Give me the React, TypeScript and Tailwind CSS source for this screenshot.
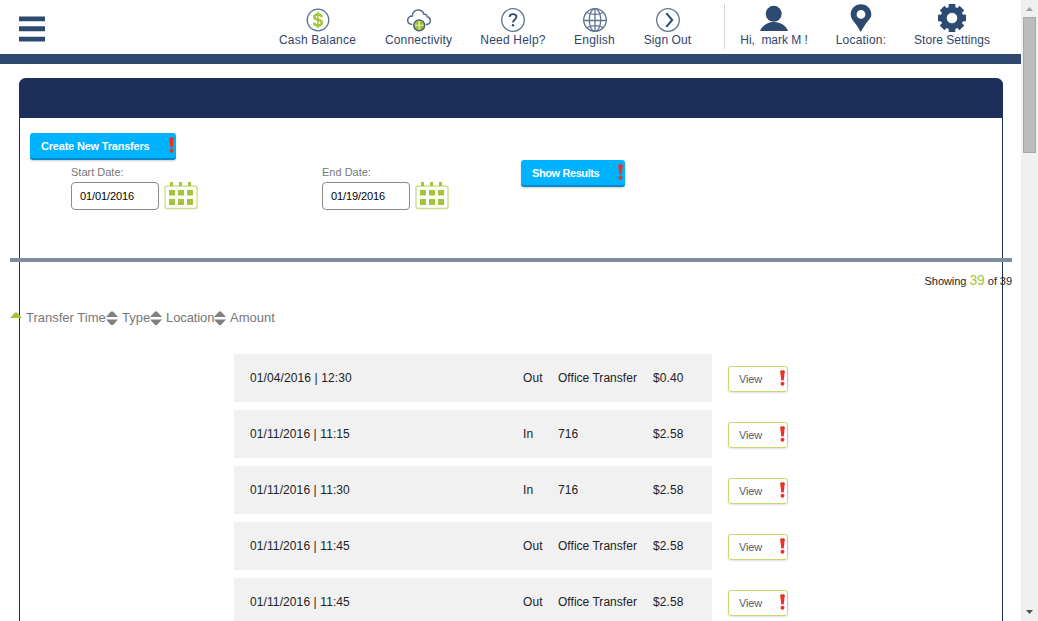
import type { ReactNode } from 'react';

const NAVY = '#2d4a71';
const GREEN = '#a4c53a';

function NavItem({ icon, label, className }: { icon: ReactNode; label: string; className: string }) {
  return (
    <a className={`flex shrink-0 flex-col items-center text-xs leading-4 text-[#2f446c] ${className}`}>
      <span className="flex h-8 items-end justify-center">{icon}</span>
      <span className="whitespace-pre">{label}</span>
    </a>
  );
}

function CashIcon() {
  return (
    <svg width="24" height="24" viewBox="0 0 24 24">
      <circle cx="12" cy="12" r="10.8" fill="none" stroke="#5d7592" strokeWidth="1.3" />
      <path d="M15.800 9C15.500 7.200 14.200 6.400 12 6.400C9.600 6.400 8.300 7.400 8.300 9C8.300 12.800 15.900 10.700 15.900 14.600C15.900 16.500 14.300 17.500 12 17.500C9.600 17.500 8.200 16.500 8 14.700" fill="none" stroke={GREEN} strokeWidth="2.500" />
      <path d="M12 3.800v16.400" stroke={GREEN} strokeWidth="1.500" />
    </svg>
  );
}

function CloudIcon() {
  return (
    <svg width="24" height="24" viewBox="0 0 24 24">
      <path d="M5.200 16.500C2.500 16.300 .7 14.600.7 12.200S2.700 8 5.300 8.100C5.200 4.500 7.800 2 11.200 2C14.300 2 16.300 3.700 17 6.300C18.800 5.900 20.200 7 20.200 8.800C22.300 9.100 23.300 10.700 23.300 12.500C23.300 14.900 21.500 16.500 18.700 16.500" fill="none" stroke="#536b88" strokeWidth="1.500" />
      <circle cx="12.200" cy="17.300" r="5.500" fill="#a0bd38" stroke="#465e73" strokeWidth="1.300" />
      <path d="M12.200 13v8.600M7.900 17.300h8.600" stroke="#e6efcb" strokeWidth="1.100" />
    </svg>
  );
}

function HelpIcon() {
  return (
    <svg width="24" height="24" viewBox="0 0 24 24" fill="none">
      <circle cx="12" cy="12" r="11.300" stroke="#5d7592" strokeWidth="1.3" />
      <path d="M8.700 9C8.700 7.200 10 6.200 11.900 6.200S15.400 7.300 15.400 9C15.400 11.400 12 11.600 12 14.500" stroke={NAVY} strokeWidth="1.800" />
      <circle cx="12" cy="17.300" r="1.200" fill={NAVY} />
    </svg>
  );
}

function GlobeIcon() {
  return (
    <svg width="24" height="24" viewBox="0 0 24 24" fill="none" stroke="#5d7592" strokeWidth="1.300">
      <circle cx="12" cy="12" r="11.300" />
      <ellipse cx="12" cy="12" rx="5.700" ry="11.300" />
      <path d="M12 .7v22.600M.7 12.500h22.600M3.800 4.500Q12 8.300 20.200 4.500M3.800 19.500Q12 15.700 20.200 19.500" />
    </svg>
  );
}

function SignOutIcon() {
  return (
    <svg width="24" height="24" viewBox="0 0 24 24" fill="none">
      <circle cx="12" cy="12" r="11.300" stroke="#5d7592" strokeWidth="1.300" />
      <path d="M10.300 5.200L16.200 12L10.300 18.800" stroke={NAVY} strokeWidth="2" />
    </svg>
  );
}

function UserIcon() {
  return (
    <svg width="28" height="28" viewBox="0 0 28 28" fill={NAVY} className="-mb-px">
      <circle cx="13.700" cy="8.800" r="8" />
      <path d="M0 26C2 20.500 7.500 17 14 17S26 20.500 28 26Z" />
    </svg>
  );
}

function PinIcon() {
  return (
    <svg width="22" height="28" viewBox="0 0 22 28" fill={NAVY}>
      <path fillRule="evenodd" d="M11 .2C5 .2.700 4.700.700 10.300C.700 15 3.500 16.800 6 20.500C8 23.300 9.500 26 10.700 28C12 25.500 14 22.500 16 19.500C18.500 16 21.300 14.500 21.300 10.300C21.300 4.700 17 .2 11 .2ZM11 6A4.400 4.400 0 1 1 11 14.800A4.400 4.400 0 0 1 11 6Z" />
    </svg>
  );
}

function GearIcon() {
  return (
    <svg width="28" height="28" viewBox="0 0 28 28" fill={NAVY}>
      <g transform="translate(14 14)">
        {[0, 45, 90, 135].map((a) => (
          <path key={a} transform={`rotate(${a})`} d="M-3.300-14H3.300V14H-3.300Z" />
        ))}
        <circle r="11.300" />
        <circle r="5.300" fill="#fff" />
      </g>
    </svg>
  );
}

function Bang({ className = '' }: { className?: string }) {
  return (
    <svg width="5" height="16" viewBox="0 0 5 16" fill="#f03020" className={className}>
      <path d="M.2 1.500C.2-.3 4.800-.3 4.800 1.500L3.700 10.500H1.300Z" />
      <circle cx="2.500" cy="13.700" r="2" />
    </svg>
  );
}

function CalendarIcon() {
  return (
    <svg width="34" height="29" viewBox="0 0 34 29" className="mt-[-1px]">
      <rect x="1" y="5" width="32" height="22.500" rx="2" fill="#fff" stroke="#ccde8e" strokeWidth="1.400" />
      <g fill={GREEN}>
        <path d="M6 1h3v4H6zM15 1h3v4h-3zM24 1h3v4h-3z" />
        <path d="M5 9h6v5.500H5zM14 9h6v5.500h-6zM23 9h6v5.500h-6zM5 18h6v6H5zM14 18h6v6h-6zM23 18h6v6h-6z" />
      </g>
    </svg>
  );
}

function BlueButton({ label, className }: { label: string; className: string }) {
  return (
    <button className={`flex h-[27px] shrink-0 justify-between rounded-[3px] border-b-2 border-[#0089cb] bg-[#00b3ff] pr-[2px] pl-[11px] text-[11px] leading-[26px] font-bold text-white shadow-[0_1px_2px_rgba(0,0,0,0.2)] ${className}`}>
      <span>{label}</span>
      <Bang className="mt-1" />
    </button>
  );
}

function DateField({ label, value, className }: { label: string; value: string; className: string }) {
  return (
    <div className={className}>
      <div className="h-[22px] text-[11px] leading-[24px] text-[#777]">{label}</div>
      <div className="flex gap-[5px]">
        <div className="h-7 w-[88px] rounded-[4px] border border-[#8c8c8c] px-2 text-[11px] leading-[27px] tracking-[-0.1px] text-black">{value}</div>
        <CalendarIcon />
      </div>
    </div>
  );
}

function SortIcon() {
  return (
    <svg width="12" height="14" viewBox="0 0 12 14" fill="#808080" className="mt-[3px]">
      <path d="M0 6L5 .5H7L12 6ZM0 8.500H12L7 14H5Z" />
    </svg>
  );
}

const transfers = [
  ['01/04/2016 | 12:30', 'Out', 'Office Transfer', '$0.40'],
  ['01/11/2016 | 11:15', 'In', '716', '$2.58'],
  ['01/11/2016 | 11:30', 'In', '716', '$2.58'],
  ['01/11/2016 | 11:45', 'Out', 'Office Transfer', '$2.58'],
  ['01/11/2016 | 11:45', 'Out', 'Office Transfer', '$2.58'],
];

function Header() {
  return (
    <header className="flex h-16 shrink-0 border-b-[10px] border-[#2e486f] bg-white pl-[19px]">
      <svg width="26" height="26" viewBox="0 0 26 26" fill={NAVY} className="mt-4">
        <path d="M0 .400h26v4.900H0zM0 10.300h26v4.900H0zM0 20.700h26v4.900H0z" />
      </svg>
      <nav className="ml-[234px] flex gap-7">
        <NavItem icon={<CashIcon />} label="Cash Balance" className="w-[77px] tracking-[0.2px]" />
        <NavItem icon={<CloudIcon />} label="Connectivity" className="ml-px w-[67px] tracking-[0.15px]" />
        <NavItem icon={<HelpIcon />} label="Need Help?" className="w-[66px] tracking-[0.2px]" />
        <NavItem icon={<GlobeIcon />} label="English" className="w-[41px] tracking-[0.2px]" />
        <NavItem icon={<SignOutIcon />} label="Sign Out" className="ml-px w-[47px] tracking-[0.1px]" />
      </nav>
      <div className="mt-1 ml-[33px] h-[45px] w-px bg-[#d5d5d5]" />
      <nav className="ml-[15px] flex gap-7">
        <NavItem icon={<UserIcon />} label="Hi,  mark M !" className="w-[68px] tracking-[-0.05px]" />
        <NavItem icon={<PinIcon />} label="Location:" className="w-[50px] tracking-[0.2px]" />
        <NavItem icon={<GearIcon />} label="Store Settings" className="w-[76px] tracking-[0.05px]" />
      </nav>
    </header>
  );
}

export default function App() {
  return (
    <div className="flex h-[621px] w-[1038px] overflow-hidden bg-white font-['Liberation_Sans',Arial,sans-serif]">
      <div className="flex w-[1021px] shrink-0 flex-col">
        <Header />
        <main className="mt-[14px] mr-[18px] ml-[19px] h-[640px] shrink-0 rounded-t-[7px] border-x border-[#1c2e5a]">
          <div className="-mx-px h-10 rounded-t-[7px] bg-[#1c2e5a]" />
          <section className="h-[140px] pt-[15px] pl-[10px]">
            <BlueButton label="Create New Transfers" className="w-[146px] tracking-[-0.2px]" />
            <div className="flex pl-[41px]">
              <DateField label="Start Date:" value="01/01/2016" className="w-[251px]" />
              <DateField label="End Date:" value="01/19/2016" className="w-[199px]" />
              <BlueButton label="Show Results" className="w-[104px] tracking-[-0.4px]" />
            </div>
          </section>
          <section className="-mx-[10px] border-t-4 border-[#7f8c9d]">
            <div className="mt-[9px] text-right text-[11px] leading-[20px] tracking-[-0.06px] text-[#222]">
              Showing <span className="text-sm leading-[18px] text-[#a4c53a]">39</span> of 39
            </div>
            <div className="mt-[17px] flex h-5 text-[13px] leading-[20px] text-[#777]">
              <svg width="12" height="6" viewBox="0 0 12 6" className="mt-1 mr-1">
                <path d="M0 6L5 .500H7L12 6Z" fill={GREEN} />
              </svg>
              <span className="w-20">Transfer Time</span>
              <SortIcon />
              <span className="ml-1 w-7">Type</span>
              <SortIcon />
              <span className="ml-1 w-12 tracking-[-0.1px]">Location</span>
              <SortIcon />
              <span className="ml-1">Amount</span>
            </div>
            <div className="mt-[26px] ml-[224px] flex flex-col gap-2">
              {transfers.map(([time, type, location, amount], i) => (
                <div key={i} className="flex h-12 gap-4">
                  <div className="flex w-[478px] bg-[#f1f1f1] pl-4 text-xs leading-[48px] tracking-[0.1px] text-[#222]">
                    <span className="w-[273px]">{time}</span>
                    <span className="w-[35px]">{type}</span>
                    <span className="w-[95px] tracking-[0.03px]">{location}</span>
                    <span>{amount}</span>
                  </div>
                  <button className="mt-3 flex h-[26px] w-[60px] justify-between rounded-[3px] border border-[#c6d96d] pr-[2px] pl-[10px] text-[11px] leading-[25px] tracking-[-0.15px] text-[#53596b] shadow-[0_1px_2px_rgba(0,0,0,0.12)]">
                    <span>View</span>
                    <Bang className="mt-[3px]" />
                  </button>
                </div>
              ))}
            </div>
          </section>
        </main>
      </div>
      <aside className="flex w-[17px] shrink-0 flex-col items-center bg-[#f0f0f0]">
        <svg width="17" height="17" viewBox="0 0 17 17" className="shrink-0">
          <path d="M5 11L8.500 7L12 11Z" fill="#a3a3a3" />
        </svg>
        <div className="h-[136px] w-[13px] border border-[#a8a8a8] bg-[#bcbcbc]" />
        <svg width="17" height="17" viewBox="0 0 17 17" className="mt-auto shrink-0">
          <path d="M5 6H12L8.500 10Z" fill="#505050" />
        </svg>
      </aside>
    </div>
  );
}
